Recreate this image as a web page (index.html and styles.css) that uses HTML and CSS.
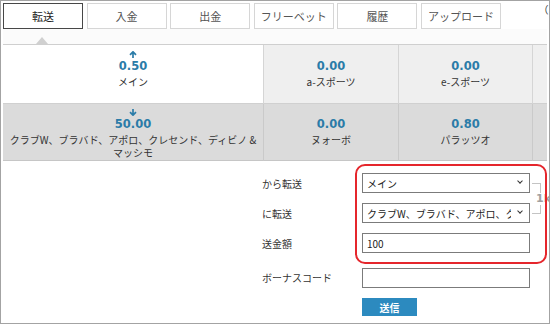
FILE: index.html
```html
<!DOCTYPE html>
<html lang="ja">
<head>
    <meta charset="UTF-8">
    <title>転送</title>
    <link rel="stylesheet" href="styles.css">
</head>
<body>
    <div class="frame">
        <div class="tabs">
            <button class="tab active">転送</button>
            <button class="tab">入金</button>
            <button class="tab">出金</button>
            <button class="tab">フリーベット</button>
            <button class="tab">履歴</button>
            <button class="tab">アップロード</button>
            <span class="tab-note">（オ</span>
        </div>
        <div class="tab-strip"><span class="caret"></span></div>

        <div class="wallets">
            <div class="wallet main">
                <svg class="arrow" width="8" height="7" viewBox="0 0 8 7"><path d="M4 7V1.2M1 3.8l3-3 3 3" stroke="#2b7ca8" stroke-width="1.7" fill="none"/></svg>
                <b class="amount">0.50</b>
                <span class="name">メイン</span>
            </div>
            <div class="wallet">
                <span class="arrow"></span>
                <b class="amount">0.00</b>
                <span class="name">a-スポーツ</span>
            </div>
            <div class="wallet">
                <span class="arrow"></span>
                <b class="amount">0.00</b>
                <span class="name">e-スポーツ</span>
            </div>
            <div class="wallet"></div>

            <div class="wallet lower">
                <svg class="arrow" width="8" height="7" viewBox="0 0 8 7"><path d="M4 0V5.8M1 3.2l3 3 3-3" stroke="#2b7ca8" stroke-width="1.7" fill="none"/></svg>
                <b class="amount">50.00</b>
                <span class="name">クラブW、ブラバド、アポロ、クレセンド、ディビノ &amp;<br>マッシモ</span>
            </div>
            <div class="wallet lower">
                <span class="arrow"></span>
                <b class="amount">0.00</b>
                <span class="name">ヌォーボ</span>
            </div>
            <div class="wallet lower">
                <span class="arrow"></span>
                <b class="amount">0.80</b>
                <span class="name">パラッツオ</span>
            </div>
            <div class="wallet lower"></div>
        </div>

        <form class="transfer">
            <label for="fromWallet">から転送</label>
            <div class="select-box">
                <select id="fromWallet">
                    <option>メイン</option>
                </select>
            </div>
            <div class="bracket"><span>1k</span></div>

            <label for="toWallet">に転送</label>
            <div class="select-box">
                <select id="toWallet">
                    <option>クラブW、ブラバド、アポロ、クレセンド、ディビノ &amp; マッシモ</option>
                </select>
            </div>

            <label for="amount">送金額</label>
            <input type="text" id="amount" value="100">

            <label for="bonusCode" class="bonus">ボーナスコード</label>
            <input type="text" id="bonusCode" class="bonus-input">

            <button type="submit" class="submit-button">送信</button>
        </form>

        <div class="highlight"></div>
    </div>
</body>
</html>
```

FILE: styles.css
```css
body {
    margin: 0;
    font-family: "Noto Sans CJK JP", sans-serif;
    background-color: #fff;
}
.frame {
    position: relative;
    width: 550px;
    height: 324px;
    box-sizing: border-box;
    border: 1px solid #a3a3a3;
    padding: 0 2px;
    overflow: hidden;
    background-color: #fff;
}
.tabs {
    display: flex;
    gap: 3.6px;
    padding-top: 2px;
    height: 26px;
}
.tab {
    flex: none;
    width: 80px;
    height: 26px;
    box-sizing: border-box;
    border: 1px solid #d6d6d6;
    background-color: #fff;
    font-family: "Noto Sans CJK JP", sans-serif;
    font-size: 11px;
    line-height: 14px;
    color: #555;
    padding: 0;
}
.tab.active {
    border-color: #474747;
    color: #222;
}
.tab-note {
    flex: none;
    margin-left: 34px;
    font-size: 10px;
    line-height: 14px;
    color: #333;
    white-space: nowrap;
}
.tab-strip {
    display: flex;
    align-items: flex-end;
    height: 15px;
    padding-left: 33px;
    border-bottom: 1px solid #cfcfcf;
    background-color: #fbfbfb;
}
.caret {
    width: 0;
    height: 0;
    border-left: 6px solid transparent;
    border-right: 6px solid transparent;
    border-bottom: 7px solid #d0d0d0;
}
.wallets {
    display: grid;
    grid-template-columns: 260px 135px 134px 1fr;
    grid-template-rows: 59px 57px;
}
.wallet {
    display: flex;
    flex-direction: column;
    align-items: center;
    box-sizing: border-box;
    padding-top: 6px;
    background-color: #efefef;
    border-left: 1px solid #d5d5d5;
    border-bottom: 1px solid #d0d0d0;
    text-align: center;
}
.wallet.main {
    background-color: #fff;
    border-left: none;
}
.wallet.lower {
    padding-top: 5px;
    background-color: #dbdbdb;
    border-left-color: #cacaca;
    border-bottom-color: #c6c6c6;
}
.wallet.lower:nth-child(5) {
    border-left: none;
}
.arrow {
    display: block;
    width: 8px;
    height: 7px;
    margin-bottom: 1px;
}
.amount {
    font-family: "DejaVu Sans", sans-serif;
    font-size: 11.5px;
    line-height: 14px;
    color: #2b7ca8;
}
.name {
    margin-top: 2px;
    font-size: 10px;
    line-height: 13px;
    color: #333;
}
.transfer {
    display: grid;
    grid-template-columns: 100px 168px 1fr;
    grid-template-rows: 20px 20px 20px 25px 18px;
    row-gap: 10px;
    margin: 12px 0 0 259px;
}
.transfer label {
    grid-column: 1;
    align-self: center;
    font-size: 10px;
    line-height: 13px;
    color: #333;
}
.transfer label.bonus {
    align-self: end;
    margin-bottom: 4px;
}
.select-box {
    position: relative;
    grid-column: 2;
}
.select-box::after {
    content: "";
    position: absolute;
    right: 8px;
    top: 6px;
    width: 3px;
    height: 3px;
    border-right: 1.5px solid #333;
    border-bottom: 1.5px solid #333;
    transform: rotate(45deg);
}
select, input {
    display: block;
    grid-column: 2;
    width: 100%;
    height: 20px;
    box-sizing: border-box;
    margin: 0;
    border: 1px solid #7b7b7b;
    border-radius: 0;
    background-color: #fff;
    font-family: "Noto Sans CJK JP", sans-serif;
    font-size: 10px;
    color: #222;
    outline: none;
}
select {
    appearance: none;
    padding: 0 18px 0 4px;
}
input {
    padding: 0 4px;
}
.bonus-input {
    align-self: end;
}
.bracket {
    grid-column: 3;
    grid-row: 1 / span 2;
    align-self: start;
    display: flex;
    align-items: center;
    width: 8px;
    height: 29px;
    margin: 10px 0 0 2px;
    border: 1px solid #c4c4c4;
    border-left: none;
}
.bracket span {
    margin-left: 4px;
    background-color: #fff;
    font-family: "DejaVu Sans", sans-serif;
    font-size: 11px;
    font-weight: bold;
    line-height: 12px;
    color: #a0a0a0;
}
.submit-button {
    grid-column: 2;
    justify-self: start;
    width: 55px;
    height: 18px;
    padding: 0;
    border: none;
    background-color: #2c8abf;
    color: #fff;
    font-family: "Noto Sans CJK JP", sans-serif;
    font-size: 10px;
    font-weight: bold;
}
.highlight {
    position: absolute;
    left: 354px;
    top: 163px;
    width: 192px;
    height: 100px;
    box-sizing: border-box;
    border: 2px solid #e5262c;
    border-radius: 10px;
}
```
